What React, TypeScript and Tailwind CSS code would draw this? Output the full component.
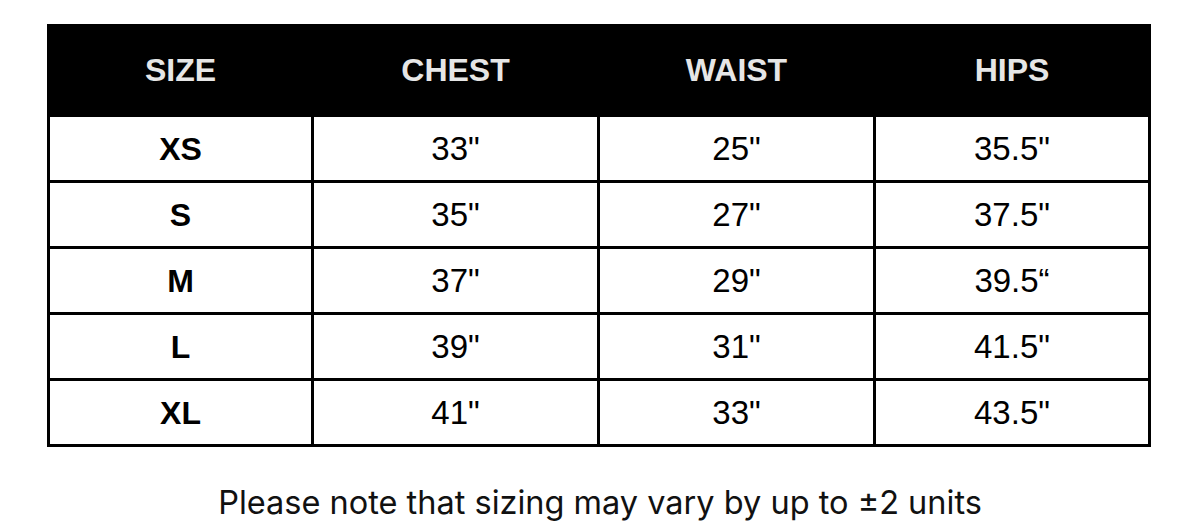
const rows = [
  ['XS', '33"', '25"', '35.5"'],
  ['S', '35"', '27"', '37.5"'],
  ['M', '37"', '29"', '39.5“'],
  ['L', '39"', '31"', '41.5"'],
  ['XL', '41"', '33"', '43.5"'],
]

const heads = ['SIZE', 'CHEST', 'WAIST', 'HIPS']

export default function App() {
  return (
    <div className="h-[527px] w-[1200px] overflow-hidden bg-white pt-[24px]">
      <div className="ml-[47px] grid w-[1104px] grid-cols-[261px_283px_273px_272px] gap-[3px] bg-black p-[3px]">
        {heads.map((h) => (
          <div
            key={h}
            className="flex h-[87px] items-center justify-center bg-black pb-[2px] font-['Liberation_Sans',Arial,sans-serif] text-[32px] font-bold text-[#e6e6e6]"
          >
            {h}
          </div>
        ))}
        {rows.map((r) =>
          r.map((v, i) => (
            <div
              key={r[0] + i}
              className={`flex h-[63px] items-center justify-center bg-white text-black font-['Liberation_Sans',Arial,sans-serif] ${
                i === 0 ? 'text-[32px] font-bold' : 'text-[33px]'
              }`}
            >
              {v}
            </div>
          )),
        )}
      </div>
      <p className="mt-[40px] text-center font-['Inter',sans-serif] text-[32.5px] leading-none text-[#111]">
        Please note that sizing may vary by up to ±2 units
      </p>
    </div>
  )
}
